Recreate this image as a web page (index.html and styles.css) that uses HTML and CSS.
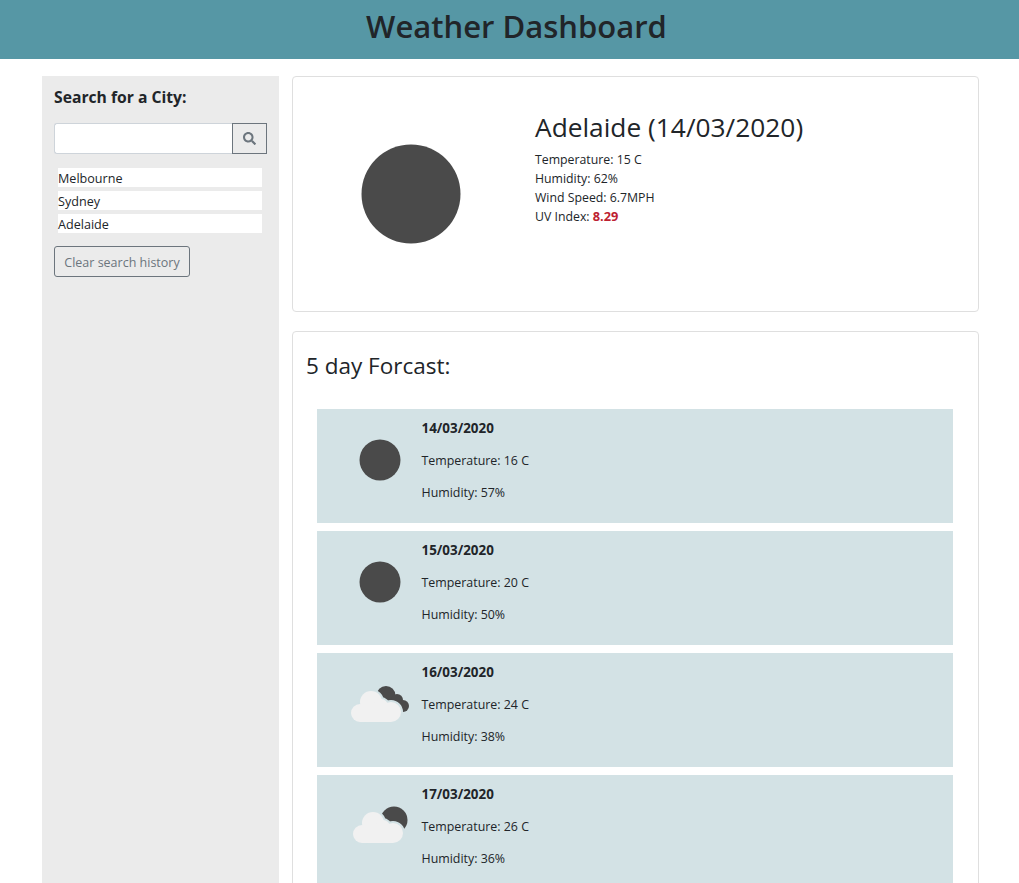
FILE: index.html
```html
<!DOCTYPE html>
<html>
	<head>
		<meta charset="utf-8" />
		<title>Weather Dashboard</title>
		<link rel="stylesheet" href="styles.css">
	</head>
	<body>
		<header class="banner"><h1>Weather Dashboard</h1></header>
		<div class="page">
			<aside class="sidebar">
				<h2>Search for a City:</h2>
				<form class="search">
					<input type="text" class="search-input" />
					<button type="button" class="search-btn" aria-label="Search">
						<svg width="13" height="13" viewBox="0 0 512 512"><path fill="#6c757d" d="M505 442.700 405.300 343c-4.500-4.500-10.600-7-17-7H372c27.600-35.300 44-79.700 44-128C416 93.100 322.900 0 208 0S0 93.100 0 208s93.100 208 208 208c48.300 0 92.700-16.400 128-44v16.300c0 6.400 2.500 12.500 7 17l99.700 99.700c9.400 9.400 24.600 9.400 33.900 0l28.300-28.300c9.400-9.400 9.400-24.600.1-34zM208 336c-70.700 0-128-57.200-128-128 0-70.700 57.200-128 128-128 70.700 0 128 57.200 128 128 0 70.700-57.200 128-128 128z"/></svg>
					</button>
				</form>
				<ul class="history">
					<li>Melbourne</li>
					<li>Sydney</li>
					<li>Adelaide</li>
				</ul>
				<button type="button" class="clear-btn">Clear search history</button>
			</aside>
			<main class="content">
				<section class="card current">
					<div class="current-icon">
						<svg width="100" height="100" viewBox="0 0 100 100"><circle cx="50" cy="50" r="49.500" fill="#4a4a4a"/></svg>
					</div>
					<div class="current-info">
						<h2>Adelaide (14/03/2020)</h2>
						<p>Temperature: 15 C</p>
						<p>Humidity: 62%</p>
						<p>Wind Speed: 6.7MPH</p>
						<p>UV Index: <strong class="uv">8.29</strong></p>
					</div>
				</section>
				<section class="card forecast">
					<h3>5 day Forcast:</h3>
					<div class="day">
						<div class="day-icon">
							<svg width="60" height="60" viewBox="0 0 60 60"><circle cx="30" cy="30" r="20.500" fill="#4a4a4a"/></svg>
						</div>
						<div class="day-info">
							<p class="date">14/03/2020</p>
							<p>Temperature: 16 C</p>
							<p>Humidity: 57%</p>
						</div>
					</div>
					<div class="day">
						<div class="day-icon">
							<svg width="60" height="60" viewBox="0 0 60 60"><circle cx="30" cy="30" r="20.500" fill="#4a4a4a"/></svg>
						</div>
						<div class="day-info">
							<p class="date">15/03/2020</p>
							<p>Temperature: 20 C</p>
							<p>Humidity: 50%</p>
						</div>
					</div>
					<div class="day">
						<div class="day-icon">
							<svg width="60" height="60" viewBox="0 0 60 60">
								<g fill="#4a4a4a"><circle cx="36" cy="21.500" r="9.500"/><circle cx="47" cy="26" r="6"/><circle cx="53" cy="32" r="6"/><rect x="36" y="26" width="14" height="12"/></g>
								<g fill="#d3e2e5" stroke="#d3e2e5" stroke-width="4"><circle cx="10" cy="39" r="9"/><circle cx="21" cy="28" r="11"/><circle cx="31" cy="32" r="7"/><circle cx="41" cy="38" r="10"/></g>
								<g fill="#f1f1f1"><circle cx="10" cy="39" r="9"/><circle cx="21" cy="28" r="11"/><circle cx="31" cy="32" r="7"/><circle cx="41" cy="38" r="10"/><rect x="10" y="34" width="31" height="14"/></g>
							</svg>
						</div>
						<div class="day-info">
							<p class="date">16/03/2020</p>
							<p>Temperature: 24 C</p>
							<p>Humidity: 38%</p>
						</div>
					</div>
					<div class="day">
						<div class="day-icon">
							<svg width="60" height="60" viewBox="0 0 60 60">
								<circle cx="44" cy="24" r="13.500" fill="#4a4a4a"/>
								<g fill="#d3e2e5" stroke="#d3e2e5" stroke-width="4"><circle cx="12" cy="38" r="9"/><circle cx="23" cy="27" r="11"/><circle cx="33" cy="31" r="7"/><circle cx="43" cy="37" r="10"/></g>
								<g fill="#f1f1f1"><circle cx="12" cy="38" r="9"/><circle cx="23" cy="27" r="11"/><circle cx="33" cy="31" r="7"/><circle cx="43" cy="37" r="10"/><rect x="12" y="33" width="31" height="14"/></g>
							</svg>
						</div>
						<div class="day-info">
							<p class="date">17/03/2020</p>
							<p>Temperature: 26 C</p>
							<p>Humidity: 36%</p>
						</div>
					</div>
				</section>
			</main>
		</div>
	</body>
</html>
```

FILE: styles.css
```css
html, body {
	margin: 0;
	height: 100%;
	overflow: hidden;
}
body {
	font-family: "Open Sans", "Noto Sans", sans-serif;
	font-size: 12.300px;
	line-height: 19px;
	color: #212529;
	background: #fff;
}
h1, h2, h3, p, ul { margin: 0; padding: 0; }

.banner {
	background: #5697a5;
	height: 59px;
	text-align: center;
}
.banner h1 {
	font-size: 31px;
	font-weight: 600;
	line-height: 53px;
	padding-left: 14px;
}

.page {
	display: flex;
	gap: 13px;
	height: 824px;
	padding: 17px 40px 0 42px;
}

.sidebar {
	width: 237px;
	flex: none;
	background: #ebebeb;
	padding: 10px 12px;
	box-sizing: border-box;
}
.sidebar h2 {
	font-size: 15.700px;
	font-weight: 700;
	line-height: 22px;
	margin-bottom: 15px;
}
.search { display: flex; width: 213px; height: 31px; }
.search-input {
	flex: 1;
	min-width: 0;
	box-sizing: border-box;
	border: 1px solid #ced4da;
	border-right: none;
	border-radius: 3px 0 0 3px;
	background: #fff;
}
.search-btn {
	width: 35px;
	padding: 0;
	background: transparent;
	border: 1px solid #6c757d;
	display: flex;
	align-items: center;
	justify-content: center;
}
.history {
	list-style: none;
	margin: 14px 5px 0 4px;
	font-size: 12.600px;
}
.history li {
	background: #fff;
	height: 19px;
	line-height: 21px;
	margin-bottom: 4px;
}
.clear-btn {
	display: block;
	margin-top: 13px;
	width: 136px;
	height: 31px;
	padding: 1px 0 0;
	font: inherit;
	font-size: 12.500px;
	color: #6c757d;
	background: transparent;
	border: 1px solid #6c757d;
	border-radius: 3px;
}

.content {
	flex: 1;
	min-width: 0;
	display: flex;
	flex-direction: column;
	gap: 19px;
}
.card {
	border: 1px solid #dfdfdf;
	border-radius: 4px;
	background: #fff;
	box-sizing: border-box;
}
.current {
	height: 236px;
	flex: none;
	display: flex;
}
.current-icon {
	width: 242px;
	flex: none;
	box-sizing: border-box;
	padding: 67px 0 0 68px;
}
.current-info { padding-top: 31px; }
.current-info h2 {
	font-size: 26.300px;
	font-weight: 500;
	line-height: 38px;
	margin-bottom: 4px;
}
.uv { color: #bd2130; font-weight: 700; font-size: 12.800px; }

.forecast {
	flex: 1;
	padding: 0 25px 0 13px;
}
.forecast h3 {
	font-size: 22.500px;
	font-weight: 500;
	line-height: 30px;
	margin: 19px 0 28px;
}
.day {
	display: flex;
	height: 114px;
	margin: 0 0 8px 11px;
	background: #d3e2e5;
}
.day-icon {
	width: 104.500px;
	flex: none;
	box-sizing: border-box;
	padding: 21px 0 0 33px;
}
.day-info { padding-top: 9px; font-size: 12.400px; }
.day-info p { line-height: 20px; margin-bottom: 12px; }
.day-info .date { font-weight: 700; font-size: 13.400px; margin-bottom: 13px; }
```
